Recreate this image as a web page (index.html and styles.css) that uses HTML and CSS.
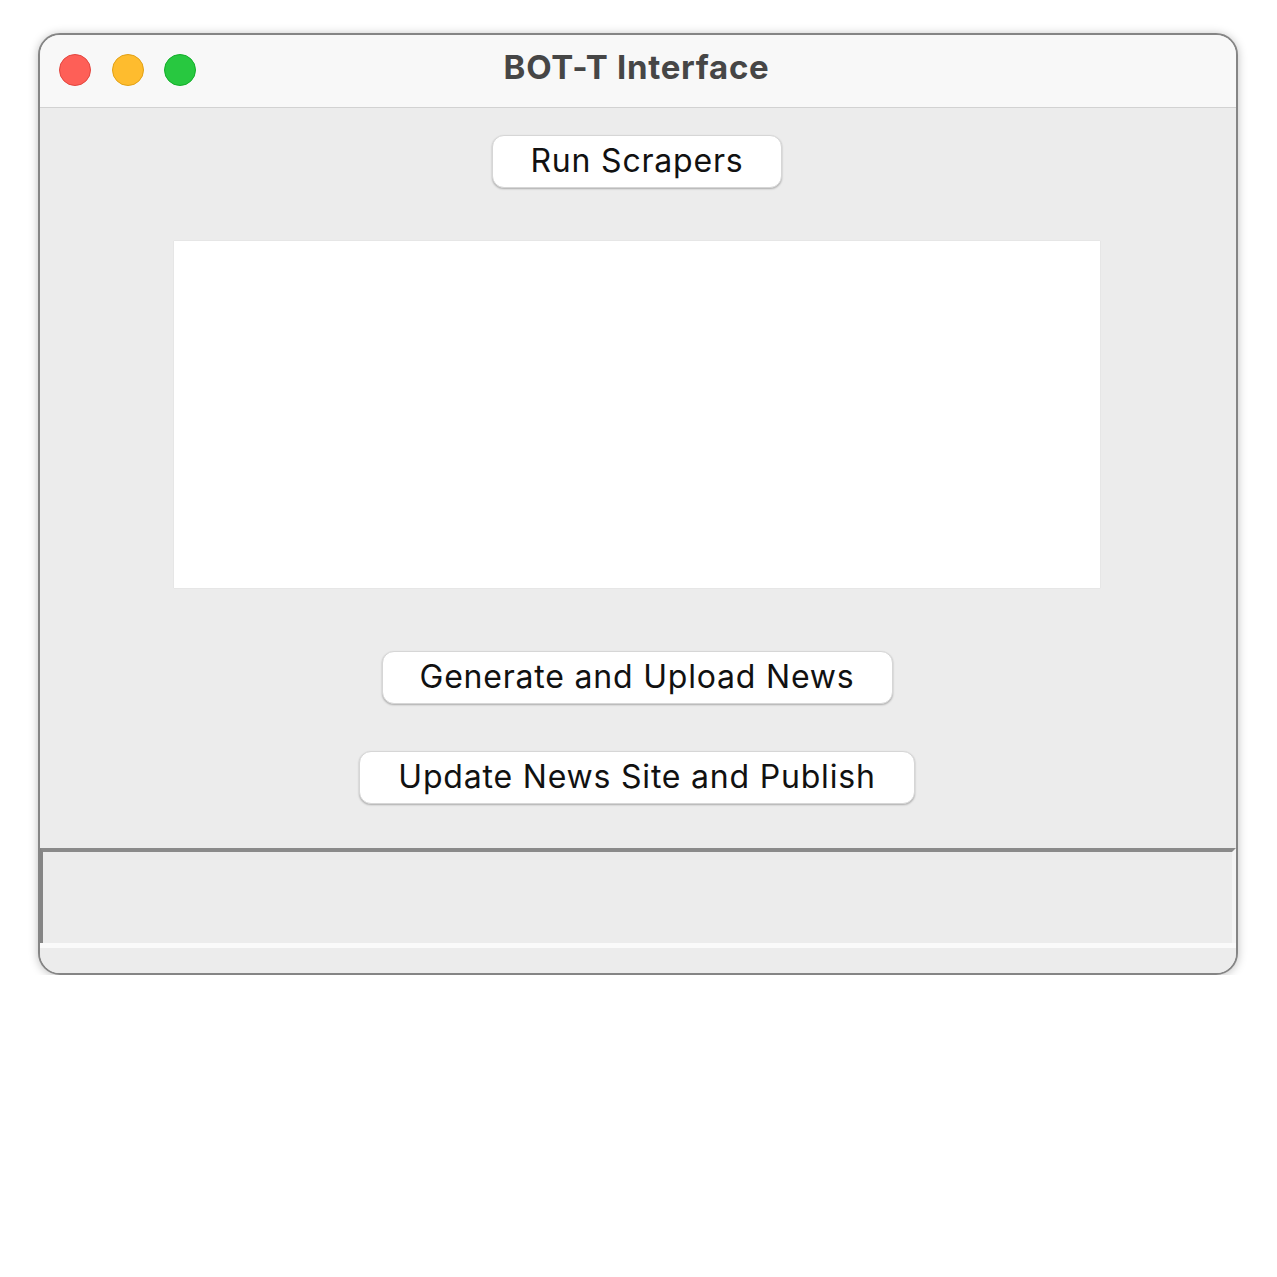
FILE: index.html
```html
<!DOCTYPE html>
<html>
<head>
<meta charset="utf-8">
<link rel="stylesheet" href="styles.css">
</head>
<body>
<div class="window">
  <div class="titlebar">
    <div class="lights">
      <span class="light red"></span>
      <span class="light yellow"></span>
      <span class="light green"></span>
    </div>
    <div class="title">BOT-T Interface</div>
  </div>
  <div class="content">
    <button class="btn btn-run">Run Scrapers</button>
    <div class="textbox"></div>
    <button class="btn btn-gen">Generate and Upload News</button>
    <button class="btn btn-upd">Update News Site and Publish</button>
  </div>
  <div class="panel"></div>
  <div class="bottom"></div>
</div>
</body>
</html>
```
FILE: styles.css
```css
html, body {
  margin: 0;
  padding: 0;
  background: #ffffff;
}
body {
  font-family: Inter, "Noto Sans", "Liberation Sans", sans-serif;
}
.window {
  box-sizing: border-box;
  margin: 33px 0 0 38px;
  width: 1200px;
  height: 942px;
  border: 2px solid #858585;
  border-radius: 22px;
  background: #ececec;
  box-shadow: 0 1px 10px rgba(0,0,0,0.25);
  overflow: hidden;
  display: flex;
  flex-direction: column;
}
.titlebar {
  position: relative;
  height: 72px;
  flex: none;
  background: #f8f8f8;
  border-bottom: 1px solid #d2d2d2;
  display: flex;
  align-items: center;
  justify-content: center;
}
.lights {
  position: absolute;
  left: 19px;
  top: 19px;
  display: flex;
  gap: 20.5px;
}
.light {
  width: 32px;
  height: 32px;
  border-radius: 50%;
  box-sizing: border-box;
}
.red { background: #fe5f57; border: 1px solid #e2463f; }
.yellow { background: #febc2e; border: 1px solid #e1a116; }
.green { background: #28c840; border: 1px solid #14ae2a; }
.title {
  font-size: 33px;
  font-weight: 700;
  color: #464646;
  margin: 0 0 8px -3px;
  letter-spacing: 0.7px;
}
.content {
  flex: none;
  height: 740px;
  box-sizing: border-box;
  padding-top: 27px;
  display: flex;
  flex-direction: column;
  align-items: center;
}
.btn {
  box-sizing: border-box;
  height: 53px;
  background: #ffffff;
  border: 1px solid #d6d6d6;
  border-radius: 12px;
  box-shadow: 0 1px 2px rgba(0,0,0,0.28);
  font-family: Inter, "Noto Sans", "Liberation Sans", sans-serif;
  font-size: 32px;
  letter-spacing: 0.8px;
  color: #111111;
  padding: 0 0 2px 0;
  margin-left: -2px;
}
.btn-run { width: 290px; }
.btn-gen { width: 511px; margin-top: 63px; }
.btn-upd { width: 556px; margin-top: 47px; }
.textbox {
  width: 926px;
  height: 347px;
  margin-top: 53px;
  margin-left: -3px;
  background: #ffffff;
  box-shadow: 0 0 1px rgba(0,0,0,0.15);
}
.panel {
  flex: none;
  height: 91px;
  border-top: 4px solid #8a8a8a;
  border-left: 3px solid #858585;
  border-right: 4px solid #f4f4f4;
  background: #ececec;
}
.bottom {
  flex: 1;
  border-top: 5px solid #fafafa;
  background: #ececec;
}
```
